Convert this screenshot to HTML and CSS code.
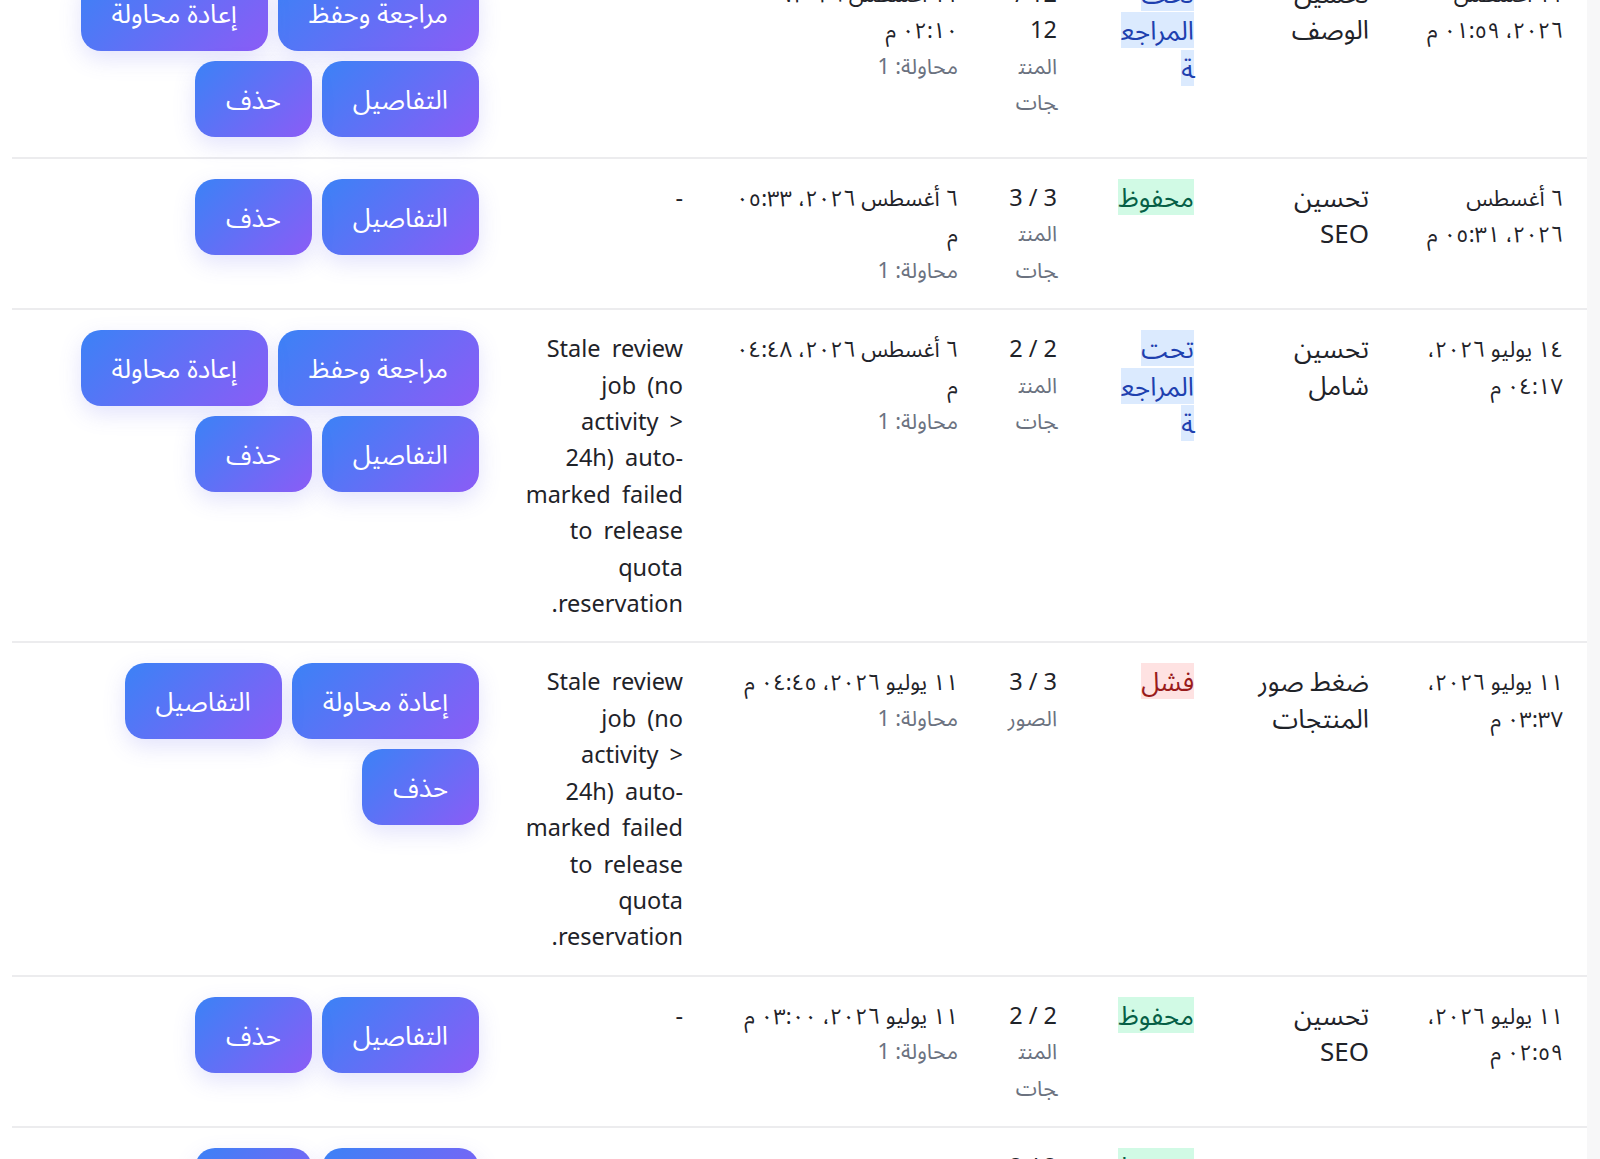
FILE: index.html
```html
<!DOCTYPE html>
<html lang="ar" dir="rtl">
<head>
    <meta charset="UTF-8">
    <meta name="viewport" content="width=device-width, initial-scale=1.0">
    <title>سجل المهام</title>
    <link rel="stylesheet" href="styles.css">
</head>
<body>
    <!-- Jobs list (scrolled part of the table) -->
    <div class="jobs-card">
        <table class="jobs-table">
            <colgroup>
                <col class="col-created">
                <col class="col-type">
                <col class="col-status">
                <col class="col-count">
                <col class="col-updated">
                <col class="col-error">
                <col class="col-actions">
            </colgroup>
            <tbody>
                <tr>
                    <td class="cell-date">١١ أغسطس ٢٠٢٦، ٠١:٥٩ م</td>
                    <td class="cell-type">تحسين الوصف</td>
                    <td class="cell-status"><span class="badge badge-review">تحت المراجعة</span></td>
                    <td>12 / 12<div class="muted">المنتجات</div></td>
                    <td class="cell-date">١١ أغسطس ٢٠٢٦، ٠٢:١٠ م<div class="muted">محاولة: 1</div></td>
                    <td class="cell-error">-</td>
                    <td>
                        <div class="actions">
                            <button class="btn">مراجعة وحفظ</button>
                            <button class="btn">إعادة محاولة</button>
                            <button class="btn">التفاصيل</button>
                            <button class="btn">حذف</button>
                        </div>
                    </td>
                </tr>
                <tr>
                    <td class="cell-date">٦ أغسطس ٢٠٢٦، ٠٥:٣١ م</td>
                    <td class="cell-type">تحسين SEO</td>
                    <td class="cell-status"><span class="badge badge-saved">محفوظ</span></td>
                    <td>3 / 3<div class="muted">المنتجات</div></td>
                    <td class="cell-date">٦ أغسطس ٢٠٢٦، ٠٥:٣٣ م<div class="muted">محاولة: 1</div></td>
                    <td class="cell-error">-</td>
                    <td>
                        <div class="actions">
                            <button class="btn">التفاصيل</button>
                            <button class="btn">حذف</button>
                        </div>
                    </td>
                </tr>
                <tr>
                    <td class="cell-date">١٤ يوليو ٢٠٢٦، ٠٤:١٧ م</td>
                    <td class="cell-type">تحسين شامل</td>
                    <td class="cell-status"><span class="badge badge-review">تحت المراجعة</span></td>
                    <td>2 / 2<div class="muted">المنتجات</div></td>
                    <td class="cell-date">٦ أغسطس ٢٠٢٦، ٠٤:٤٨ م<div class="muted">محاولة: 1</div></td>
                    <td class="cell-error">Stale review job (no activity &gt; 24h) auto-marked failed to release quota reservation.</td>
                    <td>
                        <div class="actions">
                            <button class="btn">مراجعة وحفظ</button>
                            <button class="btn">إعادة محاولة</button>
                            <button class="btn">التفاصيل</button>
                            <button class="btn">حذف</button>
                        </div>
                    </td>
                </tr>
                <tr>
                    <td class="cell-date">١١ يوليو ٢٠٢٦، ٠٣:٣٧ م</td>
                    <td class="cell-type">ضغط صور المنتجات</td>
                    <td class="cell-status"><span class="badge badge-failed">فشل</span></td>
                    <td>3 / 3<div class="muted">الصور</div></td>
                    <td class="cell-date">١١ يوليو ٢٠٢٦، ٠٤:٤٥ م<div class="muted">محاولة: 1</div></td>
                    <td class="cell-error">Stale review job (no activity &gt; 24h) auto-marked failed to release quota reservation.</td>
                    <td>
                        <div class="actions">
                            <button class="btn">إعادة محاولة</button>
                            <button class="btn">التفاصيل</button>
                            <button class="btn">حذف</button>
                        </div>
                    </td>
                </tr>
                <tr>
                    <td class="cell-date">١١ يوليو ٢٠٢٦، ٠٢:٥٩ م</td>
                    <td class="cell-type">تحسين SEO</td>
                    <td class="cell-status"><span class="badge badge-saved">محفوظ</span></td>
                    <td>2 / 2<div class="muted">المنتجات</div></td>
                    <td class="cell-date">١١ يوليو ٢٠٢٦، ٠٣:٠٠ م<div class="muted">محاولة: 1</div></td>
                    <td class="cell-error">-</td>
                    <td>
                        <div class="actions">
                            <button class="btn">التفاصيل</button>
                            <button class="btn">حذف</button>
                        </div>
                    </td>
                </tr>
                <tr>
                    <td class="cell-date">١١ يوليو ٢٠٢٦، ٠٢:٤١ م</td>
                    <td class="cell-type">تحسين SEO</td>
                    <td class="cell-status"><span class="badge badge-saved">محفوظ</span></td>
                    <td>2 / 2<div class="muted">المنتجات</div></td>
                    <td class="cell-date">١١ يوليو ٢٠٢٦، ٠٢:٤٣ م<div class="muted">محاولة: 1</div></td>
                    <td class="cell-error">-</td>
                    <td>
                        <div class="actions">
                            <button class="btn">التفاصيل</button>
                            <button class="btn">حذف</button>
                        </div>
                    </td>
                </tr>
            </tbody>
        </table>
    </div>
</body>
</html>
```

FILE: styles.css
```css
/* --- GENERAL --- */
body {
    margin: 0;
    background-color: #f7f7f8;
    font-family: "Noto Sans", "Noto Sans Arabic", "DejaVu Sans", sans-serif;
    color: #1f2329;
    overflow: hidden;
}

/* --- CARD (page is scrolled, first row is cut at the top) --- */
.jobs-card {
    background: #ffffff;
    margin: -45px 13px 0 0;
    padding: 0 0 0 12px;
}

/* --- TABLE --- */
.jobs-table {
    width: 100%;
    border-collapse: collapse;
    table-layout: fixed;
}

.col-created { width: 194px; }
.col-type    { width: 175px; }
.col-status  { width: 137px; }
.col-count   { width: 99px; }
.col-updated { width: 275px; }
.col-error   { width: 204px; }
.col-actions { width: 491px; }

.jobs-table tr {
    border-bottom: 2px solid #ececee;
}

.jobs-table td {
    padding: 20px 24px;
    vertical-align: top;
    text-align: right;
    font-size: 23.5px;
    line-height: 36.4px;
    overflow-wrap: anywhere;
}

.jobs-table .cell-date {
    font-size: 22px;
}

.jobs-table .cell-type {
    font-size: 26px;
    padding-left: 29px;
}

.jobs-table .cell-status {
    padding-left: 33px;
}

.jobs-table .cell-error {
    padding-left: 21px;
    word-spacing: 5px;
}

.muted {
    font-size: 21.5px;
    color: #6b7280;
}

/* --- STATUS BADGES --- */
.badge {
    font-size: 26px;
}

.badge-saved {
    background: #d1fae5;
    color: #065f46;
}

.badge-review {
    background: #dbeafe;
    color: #1e40af;
}

.badge-failed {
    background: #fee2e2;
    color: #991b1b;
}

/* --- ACTION BUTTONS --- */
.actions {
    display: flex;
    flex-wrap: wrap;
    gap: 10px;
}

.btn {
    font-family: inherit;
    font-size: 26px;
    line-height: 36px;
    padding: 20px 31px;
    color: #ffffff;
    background: linear-gradient(135deg, #3b82f6 0%, #8b5cf6 100%);
    border: none;
    border-radius: 20px;
    box-shadow: 0 8px 22px rgba(99, 102, 241, 0.18);
    cursor: pointer;
}
```
